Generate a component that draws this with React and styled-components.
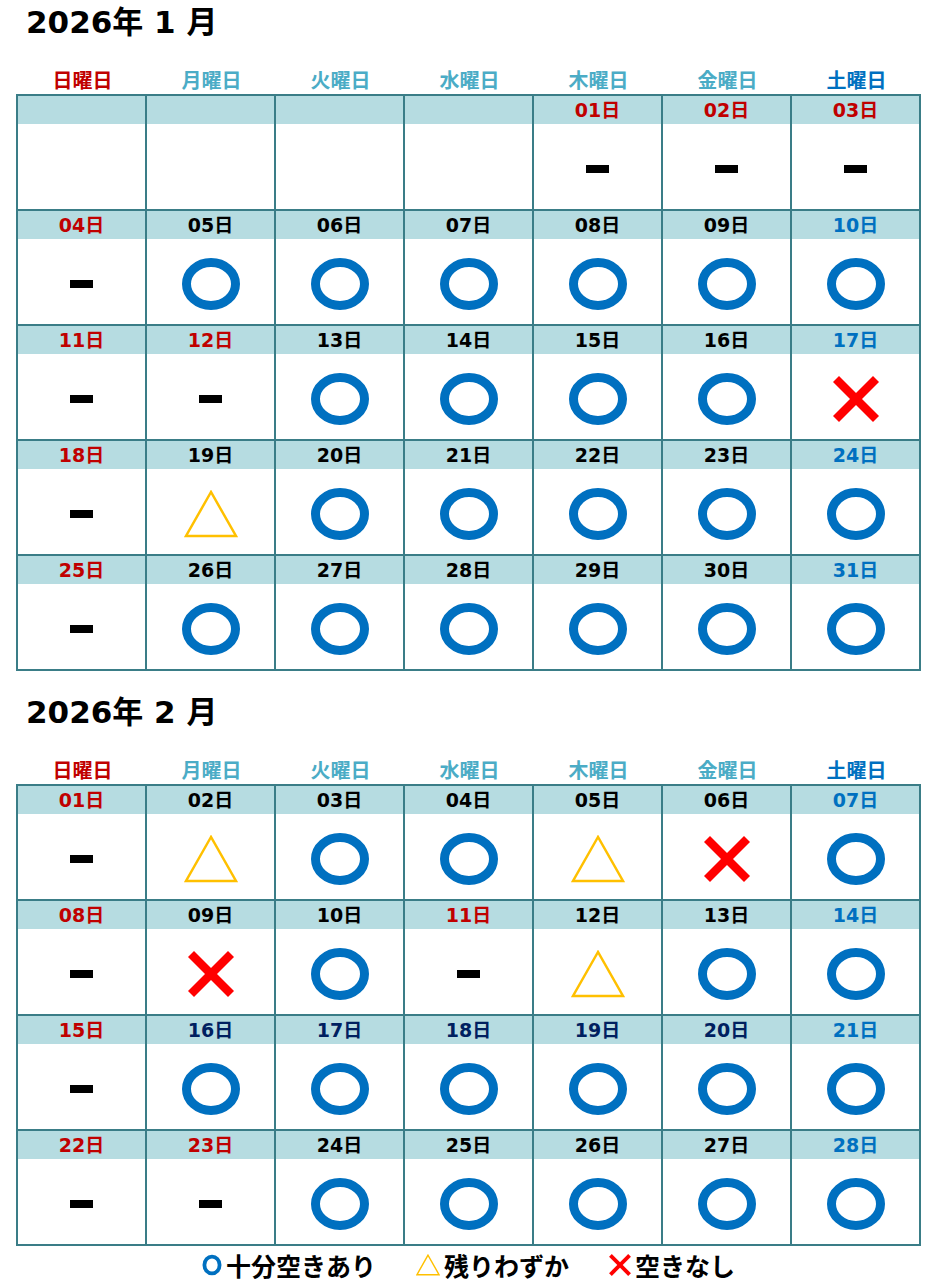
import React from "react";
import styled, { createGlobalStyle } from "styled-components";

const GlobalStyle = createGlobalStyle`
  body {
    margin: 0;
    background: #ffffff;
    font-family: "DejaVu Sans", "Noto Sans CJK JP", sans-serif;
  }
`;

const COLORS = {
  red: "#c00000",
  teal: "#4bacc6",
  blue: "#0070c0",
  navy: "#002060",
  black: "#000000",
};

const Page = styled.div`
  width: 937px;
  padding: 0 0 0 16px;
  box-sizing: border-box;
`;

const Section = styled.section`
  margin-top: ${(p) => (p.$first ? "0" : "19px")};
`;

const Title = styled.h2`
  margin: 0;
  padding-left: 10px;
  height: 44px;
  line-height: 44px;
  font-size: 31px;
  font-weight: bold;
  color: #000;
  white-space: pre;
`;

const WeekRow = styled.div`
  display: grid;
  grid-template-columns: repeat(7, 129px);
  padding-left: 2px;
  margin: 24px 0 2px;
  height: 24px;
`;

const WeekLabel = styled.div`
  text-align: center;
  font-family: "Noto Sans CJK JP", sans-serif;
  font-size: 20px;
  font-weight: bold;
  line-height: 24px;
  color: ${(p) => p.$color};
`;

const Table = styled.div`
  display: grid;
  grid-template-columns: repeat(7, 129px);
  width: fit-content;
  border-top: 2px solid #3a7d87;
  border-left: 2px solid #3a7d87;
`;

const Cell = styled.div`
  height: 115px;
  box-sizing: border-box;
  border-right: 2px solid #3a7d87;
  border-bottom: 2px solid #3a7d87;
  display: flex;
  flex-direction: column;
`;

const DayBand = styled.div`
  height: 28px;
  background: #b6dce1;
  text-align: center;
  line-height: 28px;
  font-size: 19px;
  font-weight: bold;
  color: ${(p) => p.$color};
`;

const CellBody = styled.div`
  flex: 1;
  display: flex;
  align-items: center;
  justify-content: center;
  padding-top: 4px;
`;

const Dash = styled.div`
  width: 23px;
  height: 8px;
  background: #000;
`;

const Legend = styled.div`
  display: flex;
  justify-content: center;
  gap: 40px;
  width: 905px;
  margin-top: 2px;
  height: 34px;
  align-items: center;
  font-family: "Noto Sans CJK JP", sans-serif;
  font-size: 25px;
  font-weight: bold;
  color: #000;
`;

const LegendItem = styled.div`
  display: flex;
  align-items: center;
  gap: 4px;
`;

const Circle = () => (
  <svg width="58" height="52" viewBox="0 0 58 52">
    <ellipse cx="29" cy="26" rx="24.5" ry="21.5" fill="none" stroke="#0070c0" strokeWidth="9" />
  </svg>
);

const Triangle = ({ w = 54, h = 48, sw = 2.5 }) => (
  <svg width={w} height={h} viewBox="0 0 54 48">
    <polygon points="27,2 2,46 52,46" fill="none" stroke="#ffc000" strokeWidth={sw} />
  </svg>
);

const Cross = ({ s = 46, sw = 8.5 }) => (
  <svg width={s} height={s} viewBox="0 0 46 46">
    <line x1="3" y1="3" x2="43" y2="43" stroke="#ff0000" strokeWidth={sw} />
    <line x1="43" y1="3" x2="3" y2="43" stroke="#ff0000" strokeWidth={sw} />
  </svg>
);

const Status = ({ s }) => {
  if (s === "o") return <Circle />;
  if (s === "t") return <Triangle />;
  if (s === "x") return <Cross />;
  if (s === "-") return <Dash />;
  return null;
};

const WEEKDAYS = [
  ["日曜日", COLORS.red],
  ["月曜日", COLORS.teal],
  ["火曜日", COLORS.teal],
  ["水曜日", COLORS.teal],
  ["木曜日", COLORS.teal],
  ["金曜日", COLORS.teal],
  ["土曜日", COLORS.blue],
];

// [day, colorKey, status]
const R = "red", K = "black", B = "blue", N = "navy";

const january = [
  [null, null, null], [null, null, null], [null, null, null], [null, null, null],
  ["01", R, "-"], ["02", R, "-"], ["03", R, "-"],
  ["04", R, "-"], ["05", K, "o"], ["06", K, "o"], ["07", K, "o"], ["08", K, "o"], ["09", K, "o"], ["10", B, "o"],
  ["11", R, "-"], ["12", R, "-"], ["13", K, "o"], ["14", K, "o"], ["15", K, "o"], ["16", K, "o"], ["17", B, "x"],
  ["18", R, "-"], ["19", K, "t"], ["20", K, "o"], ["21", K, "o"], ["22", K, "o"], ["23", K, "o"], ["24", B, "o"],
  ["25", R, "-"], ["26", K, "o"], ["27", K, "o"], ["28", K, "o"], ["29", K, "o"], ["30", K, "o"], ["31", B, "o"],
];

const february = [
  ["01", R, "-"], ["02", K, "t"], ["03", K, "o"], ["04", K, "o"], ["05", K, "t"], ["06", K, "x"], ["07", B, "o"],
  ["08", R, "-"], ["09", K, "x"], ["10", K, "o"], ["11", R, "-"], ["12", K, "t"], ["13", K, "o"], ["14", B, "o"],
  ["15", R, "-"], ["16", N, "o"], ["17", N, "o"], ["18", N, "o"], ["19", N, "o"], ["20", N, "o"], ["21", B, "o"],
  ["22", R, "-"], ["23", R, "-"], ["24", K, "o"], ["25", K, "o"], ["26", K, "o"], ["27", K, "o"], ["28", B, "o"],
];

const Month = ({ title, days, first }) => (
  <Section $first={first}>
    <Title>{title}</Title>
    <WeekRow>
      {WEEKDAYS.map(([label, color]) => (
        <WeekLabel key={label} $color={color}>{label}</WeekLabel>
      ))}
    </WeekRow>
    <Table>
      {days.map(([day, color, status], i) => (
        <Cell key={i}>
          <DayBand $color={color ? COLORS[color] : "#000"}>{day ? `${day}日` : ""}</DayBand>
          <CellBody>
            <Status s={status} />
          </CellBody>
        </Cell>
      ))}
    </Table>
  </Section>
);

export default function App() {
  return (
    <Page>
      <GlobalStyle />
      <Month first title="2026年 1 月" days={january} />
      <Month title="2026年 2 月" days={february} />
      <Legend>
        <LegendItem>
          <svg width="20" height="22" viewBox="0 0 20 22">
            <ellipse cx="10" cy="11" rx="7.6" ry="8.4" fill="none" stroke="#0070c0" strokeWidth="3.8" />
          </svg>
          十分空きあり
        </LegendItem>
        <LegendItem>
          <Triangle w={24} h={22} sw={3.2} />
          残りわずか
        </LegendItem>
        <LegendItem>
          <Cross s={22} sw={8} />
          空きなし
        </LegendItem>
      </Legend>
    </Page>
  );
}
